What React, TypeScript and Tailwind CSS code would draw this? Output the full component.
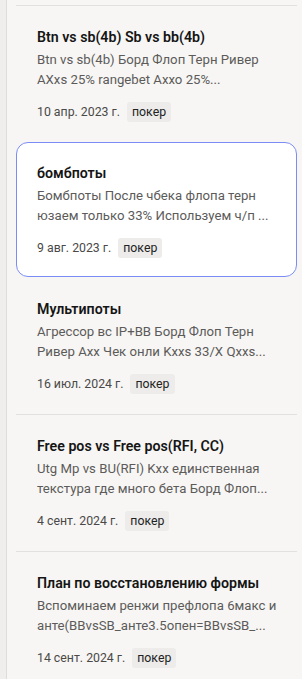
type Note = {
  id: number;
  title: string;
  lines: [string, string];
  date: string;
  tag: string;
};

const notes: Note[] = [
  {
    id: 1,
    title: 'Btn vs sb(4b) Sb vs bb(4b)',
    lines: ['Btn vs sb(4b) Борд Флоп Терн Ривер', 'AXxs 25% rangebet Axxo 25%...'],
    date: '10 апр. 2023 г.',
    tag: 'покер',
  },
  {
    id: 2,
    title: 'бомбпоты',
    lines: ['Бомбпоты После чбека флопа терн', 'юзаем только 33% Используем ч/п ...'],
    date: '9 авг. 2023 г.',
    tag: 'покер',
  },
  {
    id: 3,
    title: 'Мультипоты',
    lines: ['Агрессор вс IP+BB Борд Флоп Терн', 'Ривер Axx Чек онли Kxxs 33/X Qxxs...'],
    date: '16 июл. 2024 г.',
    tag: 'покер',
  },
  {
    id: 4,
    title: 'Free pos vs Free pos(RFI, CC)',
    lines: ['Utg Mp vs BU(RFI) Kxx единственная', 'текстура где много бета Борд Флоп...'],
    date: '4 сент. 2024 г.',
    tag: 'покер',
  },
  {
    id: 5,
    title: 'План по восстановлению формы',
    lines: ['Вспоминаем ренжи префлопа 6макс и', 'анте(BBvsSB_анте3.5опен=BBvsSB_...'],
    date: '14 сент. 2024 г.',
    tag: 'покер',
  },
];

function NoteCard({ note, active }: { note: Note; active: boolean }) {
  return (
    <div
      className={
        active
          ? 'rounded-[12px] border border-[#7b8cf5] bg-white px-[20px] pt-[19px] pb-[18px]'
          : 'border-t border-[#e2e1df] px-[21px] pt-[20px] pb-[20px]'
      }
    >
      <h3 className="text-[14.2px] leading-[22px] font-semibold text-[#151515]">{note.title}</h3>
      <div className="mt-[2px] text-[13.2px] leading-[20px] text-[#5c5b5a]">
        {note.lines.map((line) => (
          <p key={line} className="overflow-hidden whitespace-nowrap">
            {line}
          </p>
        ))}
      </div>
      <div className="mt-[12px] flex items-center gap-[7px]">
        <span className="text-[12.3px] leading-[20px] text-[#4a4948]">{note.date}</span>
        <span className="rounded-[3px] bg-[#edecea] px-[5px] text-[12.3px] leading-[20px] text-[#222]">
          {note.tag}
        </span>
      </div>
    </div>
  );
}

export default function App() {
  const activeId = 2;
  return (
    <div
      className="flex h-[679px] w-[302px] overflow-hidden bg-[#efeeec]"
      style={{ fontFamily: 'Roboto, "Noto Sans", sans-serif' }}
    >
      <div className="ml-[6px] flex flex-1 flex-col border-l border-r-2 border-l-[#dedddb] border-r-[#fbfaf9] bg-[#f7f6f4] pt-[5px] pr-[6px] pl-[9px]">
        {notes.map((note, i) => {
          const active = note.id === activeId;
          const afterActive = notes[i - 1]?.id === activeId;
          return (
            <div key={note.id} className={afterActive ? '[&>div]:border-t-transparent' : ''}>
              <NoteCard note={note} active={active} />
            </div>
          );
        })}
      </div>
    </div>
  );
}
